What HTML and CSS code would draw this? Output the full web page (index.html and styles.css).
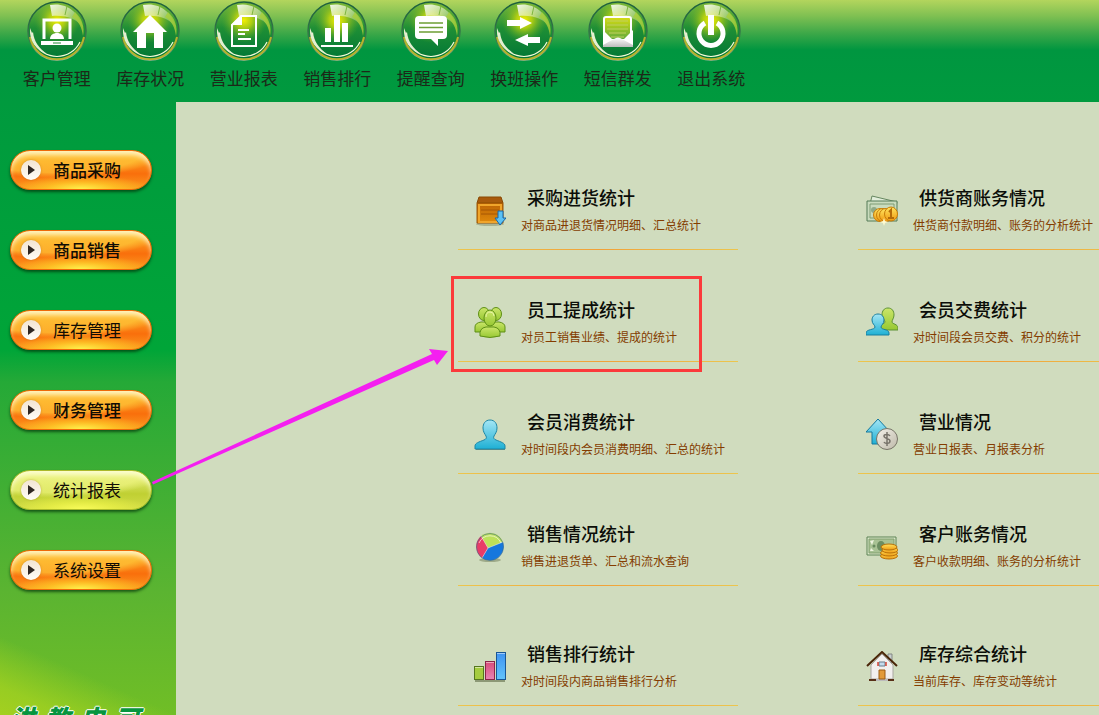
FILE: index.html
```html
<!DOCTYPE html>
<html lang="zh-CN">
<head>
<meta charset="utf-8">
<title>统计报表</title>
<link rel="stylesheet" href="styles.css">
</head>
<body>
<svg class="defs" aria-hidden="true">
  <defs>
    <linearGradient id="orbBase" x1="0" y1="0" x2="0" y2="1"><stop offset="0" stop-color="#7db93a"/><stop offset=".45" stop-color="#1f8f35"/><stop offset="1" stop-color="#007636"/></linearGradient>
    <radialGradient id="orbGlow" cx=".5" cy=".3" r=".42"><stop offset="0" stop-color="#f4f000"/><stop offset=".35" stop-color="#c3d60e" stop-opacity=".85"/><stop offset="1" stop-color="#5aa62a" stop-opacity="0"/></radialGradient>
    <linearGradient id="orbRim" x1="0" y1="0" x2="0" y2="1"><stop offset="0" stop-color="#1c5f3c"/><stop offset=".7" stop-color="#3c7d4c"/><stop offset="1" stop-color="#9fb3a0"/></linearGradient>
    <linearGradient id="shine" x1="0" y1="0" x2="1" y2="1"><stop offset="0" stop-color="#fff" stop-opacity=".9"/><stop offset="1" stop-color="#cfe6a0" stop-opacity=".15"/></linearGradient>
    <linearGradient id="paper" x1="0" y1="0" x2="0" y2="1"><stop offset="0" stop-color="#d8dc10"/><stop offset="1" stop-color="#4da243"/></linearGradient>
    <linearGradient id="flap" x1="0" y1="0" x2="0" y2="1"><stop offset="0" stop-color="#fff"/><stop offset="1" stop-color="#bcbcbc"/></linearGradient>
    <linearGradient id="blue" x1="0" y1="0" x2="0" y2="1"><stop offset="0" stop-color="#a5e6f5"/><stop offset="1" stop-color="#1eb0d4"/></linearGradient>
    <linearGradient id="lime" x1="0" y1="0" x2="0" y2="1"><stop offset="0" stop-color="#cbe66a"/><stop offset="1" stop-color="#97c832"/></linearGradient>
    <linearGradient id="gold" x1="0" y1="0" x2="0" y2="1"><stop offset="0" stop-color="#ffe45e"/><stop offset="1" stop-color="#ef9a12"/></linearGradient>
    <linearGradient id="wood" x1="0" y1="0" x2="0" y2="1"><stop offset="0" stop-color="#bd6405"/><stop offset="1" stop-color="#e08a0c"/></linearGradient>
    <linearGradient id="silver" x1="0" y1="0" x2="1" y2="1"><stop offset="0" stop-color="#f4f2ea"/><stop offset="1" stop-color="#bdb8a8"/></linearGradient>
    <linearGradient id="barRed" x1="0" y1="0" x2="0" y2="1"><stop offset="0" stop-color="#d94b78"/><stop offset="1" stop-color="#e884b4"/></linearGradient>
    <linearGradient id="barBlue" x1="0" y1="0" x2="0" y2="1"><stop offset="0" stop-color="#3f93f2"/><stop offset="1" stop-color="#63c4fb"/></linearGradient>
    <symbol id="orb" viewBox="0 0 60 60">
      <circle cx="30" cy="30" r="29" fill="url(#orbBase)" stroke="url(#orbRim)" stroke-width="1.500"/>
      <circle cx="30" cy="30" r="27" fill="url(#orbGlow)"/>
      <path d="M3 36A27.500 27.500 0 0 0 57 36" fill="none" stroke="#b6b42c" stroke-width="2"/>
      <path d="M7 41A25.500 25.500 0 0 0 53 41" fill="none" stroke="#f6fbd8" stroke-width="1.200"/>
      <path d="M3 27L5 32L6 31C7 41 12 47 20 53C9 49 2 40 3 27Z" fill="#e5efd0"/>
      <path d="M23 4C38 1 52 10 56 27C50 18 40 14 25 15Z" fill="url(#shine)"/>
      <path d="M48 11C55 17 58 26 56 35C55 27 52 20 45 16Z" fill="#a9cf38" opacity=".8"/>
      <path d="M40 5L38 14" stroke="#7eb53e"/>
    </symbol>
    <symbol id="person" viewBox="0 0 32 32">
      <path d="M16 1c5 0 7 4 7 8 0 4-2 6-3 8-1 2 0 3 2 4 5 2 9 3 9 6v3H1v-3c0-3 4-4 9-6 2-1 3-2 2-4-1-2-3-4-3-8 0-4 2-8 7-8z"/>
    </symbol>
  </defs>
</svg>
<div class="app">
  <header class="toolbar">
    <button class="tool" type="button"><svg viewBox="0 0 60 60"><use href="#orb"/><path d="M17 38V19h26v19" fill="none" stroke="#fff" stroke-width="3"/><circle cx="30" cy="27" r="4.500" fill="#fff"/><path d="M23 38c0-8 14-8 14 0z" fill="#fff"/><path d="M14 40h32v4H14z" fill="#fff"/><path d="M26 42h8" stroke="#238b38"/></svg><span>客户管理</span></button>
    <button class="tool" type="button"><svg viewBox="0 0 60 60"><use href="#orb"/><path d="M30 14L47 31h-4v16H34V32h-8v15H17V31h-4z" fill="#fff"/></svg><span>库存状况</span></button>
    <button class="tool" type="button"><svg viewBox="0 0 60 60"><use href="#orb"/><path d="M27 15H42V45H18V24Z" fill="none" stroke="#fff" stroke-width="2"/><path d="M28 14v10H17z" fill="#fff"/><path d="M24 29h11M24 33h7M24 38h13" stroke="#fff" stroke-width="2"/></svg><span>营业报表</span></button>
    <button class="tool" type="button"><svg viewBox="0 0 60 60"><use href="#orb"/><path d="M18 27h6v14h-6zM27 14h6v27h-6zM35 22h6v19h-6zM14 44h32v2H14z" fill="#fff"/></svg><span>销售排行</span></button>
    <button class="tool" type="button"><svg viewBox="0 0 60 60"><use href="#orb"/><path d="M18 15h24q4 0 4 4v15q0 4-4 4h-5v7l-7-7H18q-4 0-4-4V19q0-4 4-4z" fill="#fff"/><path d="M18 22h24M18 26.500h24M18 31h24" stroke="#6d9f35" stroke-width="1.500"/></svg><span>提醒查询</span></button>
    <button class="tool" type="button"><svg viewBox="0 0 60 60"><use href="#orb"/><path d="M13 19h13v-3l12 6-12 6v-3H13zM46 36H34v-3l-13 6 13 6v-3h12z" fill="#fff"/></svg><span>换班操作</span></button>
    <button class="tool" type="button"><svg viewBox="0 0 60 60"><use href="#orb"/><rect x="16" y="16" width="27" height="26" rx="2" fill="url(#paper)" stroke="#fff" stroke-width="2"/><path d="M19 20h21M19 24h21M19 28h21M21 32h17M23 36h13" stroke="#bfd060"/><path d="M15 29l9 9h12l9-9v17H15z" fill="#fff"/><path d="M15 46V44l11-6q4-3 8 0l11 6v2z" fill="url(#flap)"/></svg><span>短信群发</span></button>
    <button class="tool" type="button"><svg viewBox="0 0 60 60"><use href="#orb"/><path d="M24 22a12 12 0 1 0 12 0" fill="none" stroke="#fff" stroke-width="5"/><path d="M27 14h6v20h-6z" fill="#fff"/></svg><span>退出系统</span></button>
  </header>

  <aside class="sidebar">
    <nav class="menu">
      <button class="pill strong" type="button"><i class="play"></i>商品采购</button>
      <button class="pill strong" type="button"><i class="play"></i>商品销售</button>
      <button class="pill" type="button"><i class="play"></i>库存管理</button>
      <button class="pill strong" type="button"><i class="play"></i>财务管理</button>
      <button class="pill current" type="button"><i class="play"></i>统计报表</button>
      <button class="pill" type="button"><i class="play"></i>系统设置</button>
    </nav>
    <div class="brand"><span>洪</span><span>教</span><span>电</span><span>可</span></div>
  </aside>

  <main class="reports">
    <a class="report" href="#"><svg viewBox="0 0 32 32"><ellipse cx="16" cy="29" rx="14" ry="2" fill="#7f8a68" opacity=".5"/><path d="M5 2h22l2 6H3z" fill="#a85a0c" stroke="#8a4a04"/><path d="M3 8h26v20H3z" fill="url(#wood)" stroke="#9b5604"/><path d="M4 9h24v2H4zM4 26h24v2H4zM4 11h2v15H4zM26 11h2v15h-2z" fill="#f0a52b"/><path d="M7 15h18M7 19h18" stroke="#a65704"/><path d="M24 16h5v7h3l-6 7-5-7h3z" fill="#5bc2f5" stroke="#1767a8"/></svg><span class="copy"><strong>采购进货统计</strong><small>对商品进退货情况明细、汇总统计</small></span></a>
    <a class="report side" href="#"><svg viewBox="0 0 32 32"><path d="M6 1l25 6-2 8L4 9z" fill="#e1edda" stroke="#668760"/><path d="M1 6h30v20H1z" fill="#c9dbbd" stroke="#557a56"/><path d="M4 9h24v14H4z" fill="none" stroke="#7f9c75"/><circle cx="8" cy="15" r="3" fill="#8fa987"/><g fill="url(#gold)" stroke="#c77c08"><circle cx="14" cy="20" r="6.500"/><circle cx="17" cy="20" r="6.500"/><circle cx="20" cy="20" r="6.500"/><ellipse cx="25" cy="19" rx="6.500" ry="7"/></g><path d="M23 17l2-2v8m-3 0h6" stroke="#b56b08" stroke-width="2" fill="none"/><path d="M18 23l1 3 3 1-3 1-1 3-1-3-3-1 3-1z" fill="#fffbd0"/></svg><span class="copy"><strong>供货商账务情况</strong><small>供货商付款明细、账务的分析统计</small></span></a>

    <a class="report marked" href="#"><svg viewBox="0 0 32 32"><g fill="url(#lime)" stroke="#5f8f17"><ellipse cx="10" cy="7" rx="5.500" ry="6.500"/><ellipse cx="22" cy="7" rx="5.500" ry="6.500"/><path d="M1 25v-5q0-4 6-5h18q6 1 6 5v5z"/><path d="M6 29q-1-8 6-9h8q7 1 6 9-10 3-20 0z"/><ellipse cx="16" cy="11" rx="6" ry="8"/></g><path d="M12 10q0-5 4-5t4 4" fill="none" stroke="#e7f4a5"/></svg><span class="copy"><strong>员工提成统计</strong><small>对员工销售业绩、提成的统计</small></span></a>
    <a class="report side" href="#"><svg viewBox="0 0 32 32"><path d="M22 1c4 0 6 3 6 7 0 3-2 5-2 7 0 2 6 2 6 6v2H13v-4c0-2 6-2 6-4 0-2-3-4-3-7 0-4 2-7 6-7z" fill="url(#lime)" stroke="#5c9134"/><path d="M12 7c4 0 6 3 6 6 0 4-3 5-3 7 0 3 8 2 8 6v2H0v-2c0-4 9-3 9-6 0-2-3-3-3-7 0-3 2-6 6-6z" fill="url(#blue)" stroke="#187e9f"/></svg><span class="copy"><strong>会员交费统计</strong><small>对时间段会员交费、积分的统计</small></span></a>

    <a class="report" href="#"><svg viewBox="0 0 32 32"><path d="M2 30h29" stroke="#7b8f76" stroke-width="2"/><use href="#person" fill="url(#blue)" stroke="#1d86a6"/></svg><span class="copy"><strong>会员消费统计</strong><small>对时间段内会员消费明细、汇总的统计</small></span></a>
    <a class="report side" href="#"><svg viewBox="0 0 32 32"><path d="M12 0l12 13h-6v12H6V13H0z" fill="url(#blue)" stroke="#14789e"/><circle cx="21" cy="20" r="10.500" fill="url(#silver)" stroke="#777467"/><path d="M24 17c-1-2-6-2-6 0 0 3 6 2 6 5 0 3-5 3-6 1M21 13v14" fill="none" stroke="#77736a" stroke-width="1.500"/></svg><span class="copy"><strong>营业情况</strong><small>营业日报表、月报表分析</small></span></a>

    <a class="report" href="#"><svg viewBox="0 0 32 32"><ellipse cx="16" cy="29" rx="11" ry="2" fill="#7f8a68" opacity=".6"/><path d="M14 17L7 5A14 14 0 0 1 29 11z" fill="#bde05a"/><path d="M14 17l15-6A14 14 0 0 1 8 27z" fill="#1677dd"/><path d="M14 17L8 27A14 14 0 0 1 7 5z" fill="#e83b67"/><path d="M14 17L7 5M14 17l15-6M14 17L8 27" stroke="#fff" stroke-opacity=".4"/><circle cx="16" cy="16" r="13.500" fill="none" stroke="#3a6988" stroke-opacity=".6"/><path d="M5 12a12 12 0 0 1 22 0" fill="none" stroke="#fff" stroke-opacity=".6"/></svg><span class="copy"><strong>销售情况统计</strong><small>销售进退货单、汇总和流水查询</small></span></a>
    <a class="report side" href="#"><svg viewBox="0 0 32 32"><path d="M1 6h29v18H1z" fill="#dae7c9" stroke="#5c8355"/><path d="M3 8h25v14H3z" fill="#a8c294" stroke="#81a06f"/><ellipse cx="15" cy="15" rx="4" ry="5" fill="#6c8e61"/><path d="M4 10l4-1-2 5zM4 20h4l-3-3z" fill="#edf4df"/><circle cx="8" cy="15" r="1.500" fill="#688b5e"/><g fill="url(#gold)" stroke="#b97108"><ellipse cx="23" cy="25" rx="8.500" ry="3"/><ellipse cx="23" cy="22" rx="8.500" ry="3"/><ellipse cx="24" cy="19" rx="8" ry="3"/><ellipse cx="23" cy="16" rx="8" ry="3"/></g></svg><span class="copy"><strong>客户账务情况</strong><small>客户收款明细、账务的分析统计</small></span></a>

    <a class="report last" href="#"><svg viewBox="0 0 32 32"><path d="M1 30h30" stroke="#8c9876" stroke-width="2"/><rect x=".5" y="15.500" width="9" height="13" fill="#a5cc3f" stroke="#55771d"/><rect x="11.500" y="10.500" width="9" height="18" fill="url(#barRed)" stroke="#8b2448"/><rect x="22.500" y="1.500" width="9" height="27" fill="url(#barBlue)" stroke="#185696"/><path d="M1 16.500h8M12 11.500h8M23 2.500h8" stroke="#fff" stroke-opacity=".5"/></svg><span class="copy"><strong>销售排行统计</strong><small>对时间段内商品销售排行分析</small></span></a>
    <a class="report side last" href="#"><svg viewBox="0 0 32 32"><path d="M22 3h4v9h-4z" fill="#c9cfce" stroke="#828784"/><path d="M5 14L16 3l11 11v14H5z" fill="#f2efee" stroke="#aaa6a2"/><path d="M1 15L16 1l15 14" fill="none" stroke="#4a2508" stroke-width="2"/><path d="M3 29h9M21 29h7" stroke="#572f16" stroke-width="2"/><path d="M10 29h12" stroke="#bbb" stroke-width="2"/><path d="M13 19h6v9h-6z" fill="#e29a39" stroke="#9b5a15"/><path d="M13 11h6v4h-6z" fill="#c4dbed" stroke="#697d8d"/><path d="M12 11v4M20 11v4" stroke="#d54436" stroke-width="1.500"/></svg><span class="copy"><strong>库存综合统计</strong><small>当前库存、库存变动等统计</small></span></a>
  </main>

  <svg class="pointer" viewBox="0 0 296 137" aria-hidden="true"><path d="M0 134L280 6 277 1 296 3 285 17 282 12 1 136.500Z" fill="#f41ff0"/></svg>
</div>
</body>
</html>
```
FILE: styles.css
```css
* { box-sizing: border-box; }

body {
  margin: 0;
  overflow: hidden;
  font-family: "Noto Sans CJK SC", sans-serif;
}

button {
  border: 0;
  padding: 0;
  background: none;
  font: inherit;
  color: inherit;
  cursor: pointer;
}

.defs { position: absolute; width: 0; height: 0; }

.app {
  position: relative;
  display: grid;
  grid-template: auto 1fr / 176px 1fr;
  height: 100vh;
  overflow: hidden;
}

.toolbar {
  grid-column: 1 / -1;
  display: grid;
  grid-template-columns: repeat(8, 1fr);
  padding: 1px 341px 11px 10px;
  background: linear-gradient(#b3d55d 0, #7fc052 16px, #3aa748 34px, #009640 50px, #009a3e 100%);
}

.tool {
  display: flex;
  flex-direction: column;
  align-items: center;
  gap: 4px;
  font-size: 17px;
  line-height: 26px;
  white-space: nowrap;
  color: #1c2918;
}

.tool svg { width: 60px; height: 60px; }

.sidebar {
  display: flex;
  flex-direction: column;
  justify-content: space-between;
  min-height: 0;
  padding-top: 48px;
  overflow: hidden;
  background:
    linear-gradient(24deg, rgba(176, 212, 30, .8) 0, rgba(170, 212, 32, .7) 26px, rgba(140, 200, 40, 0) 72px),
    linear-gradient(#009a3e 0, #00a538 248px, #25a937 280px, #5bb431 490px, #70be26 100%);
}

.menu {
  display: flex;
  flex-direction: column;
  gap: 40px;
  padding: 0 24px 0 10px;
}

.pill {
  display: flex;
  align-items: center;
  gap: 12px;
  height: 40px;
  padding: 0 0 1px 10px;
  border: 1px solid #ee6a08;
  border-radius: 20px;
  background:
    radial-gradient(ellipse 70px 14px at 50% 100%, #fff04a, rgba(255, 215, 40, .6) 50%, transparent),
    radial-gradient(ellipse 110px 27px at 32% 0, rgba(255, 205, 60, .65) 80%, transparent 100%),
    linear-gradient(#ffb42a, #f96f0c 60%, #fb9a20);
  box-shadow: 0 2px 3px rgba(0, 50, 10, .7), inset 0 5px 5px -1px rgba(255, 255, 225, .8);
  font-size: 17px;
  line-height: 24px;
  color: #100c04;
}

.strong { font-weight: 500; }

.current {
  border-color: #aab92a;
  background:
    radial-gradient(ellipse 70px 14px at 50% 100%, #f8fb58, rgba(240, 245, 70, .6) 50%, transparent),
    radial-gradient(ellipse 110px 27px at 32% 0, rgba(240, 246, 130, .65) 80%, transparent 100%),
    linear-gradient(#edf38a, #c0d033 60%, #d2dc48);
}

.play {
  display: flex;
  align-items: center;
  justify-content: center;
  width: 20px;
  height: 20px;
  border-radius: 50%;
  background: linear-gradient(#f2e4d2, #fffdf8);
  box-shadow: 0 0 2px rgba(150, 90, 30, .5);
}

.play::before {
  content: "";
  border-style: solid;
  border-width: 5px 0 5px 7px;
  border-color: transparent transparent transparent #2e2622;
}

.brand {
  display: flex;
  gap: 10px;
  height: 11px;
  padding-left: 10px;
  font-size: 25px;
  font-weight: 900;
  font-style: italic;
  line-height: 26px;
  color: #07953f;
  text-shadow: 1px 0 #fff, -1px 0 #fff, 0 1px #fff, 0 -1px #fff;
}

.reports {
  display: grid;
  grid-template-columns: 280px 280px;
  column-gap: 120px;
  align-content: start;
  min-height: 0;
  padding: 36px 0 0 282px;
  overflow: hidden;
  background: #d0dcbe;
}

.report {
  position: relative;
  display: flex;
  align-items: center;
  gap: 15px;
  padding: 45px 0 10px 16px;
  border-bottom: 1px solid;
  border-image: linear-gradient(90deg, #ecc64e, #f1a138 50%, #ecc64e) 1;
  color: #843c00;
  text-decoration: none;
  white-space: nowrap;
}

.side { padding-left: 8px; }

.report svg { flex: none; width: 32px; height: 32px; }

.last { margin-top: 8px; }

.copy { display: flex; flex-direction: column; }

.copy strong {
  padding-left: 6px;
  font-size: 18px;
  font-weight: 500;
  line-height: 28px;
  color: #0b0d08;
}

.copy small { font-size: 12px; line-height: 28px; }

.marked::after {
  content: "";
  box-sizing: border-box;
  position: absolute;
  top: 26px;
  left: -7px;
  width: 251px;
  height: 96px;
  border: 3px solid #fb3a3b;
  z-index: 1;
}

.pointer {
  position: absolute;
  top: 348px;
  left: 152px;
  width: 296px;
  height: 137px;
  z-index: 2;
  pointer-events: none;
}
```
